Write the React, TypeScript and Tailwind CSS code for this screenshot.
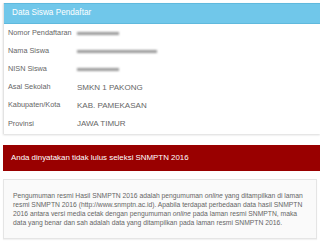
import React from "react";

const rows: { label: string; value?: string; blur?: number }[] = [
  { label: "Nomor Pendaftaran", blur: 42 },
  { label: "Nama Siswa", blur: 80 },
  { label: "NISN Siswa", blur: 42 },
  { label: "Asal Sekolah", value: "SMKN 1 PAKONG" },
  { label: "Kabupaten/Kota", value: "KAB. PAMEKASAN" },
  { label: "Provinsi", value: "JAWA TIMUR" },
];

export default function App() {
  return (
    <div
      className="w-[320px] h-[249px] overflow-hidden bg-white pl-[3px] pt-[3px]"
      style={{ fontFamily: '"Liberation Sans", Arial, sans-serif' }}
    >
      <div className="border-l border-[#e3e3e3] shadow-[0_1px_2px_rgba(0,0,0,0.15)] bg-white">
        <div className="h-[21px] bg-[#70c7ea] border-t border-b border-[#5fb9dd] flex items-center pl-[8px] text-[8.2px] text-white">
          Data Siswa Pendaftar
        </div>
        <div className="pt-0 pb-[1px]">
          {rows.map((r) => (
            <div key={r.label} className="h-[18.2px] flex items-center text-[7.3px] text-[#666]">
              <div className="w-[73px] pl-[4px]">{r.label}</div>
              {r.value ? (
                <div className="text-[8px]">{r.value}</div>
              ) : (
                <div
                  className="h-[3px] bg-[#9a9a9a] blur-[1px]"
                  style={{ width: r.blur }}
                />
              )}
            </div>
          ))}
        </div>
      </div>
      <div className="mt-[11px] h-[26px] bg-[#990000] flex items-center pl-[8px] text-[7.9px] text-white">
        Anda dinyatakan tidak lulus seleksi SNMPTN 2016
      </div>
      <div className="mt-[8px] mr-[3px] border border-[#e5e5e5] bg-[#fafafa] shadow-[0_1px_1px_rgba(0,0,0,0.05)] pl-[9px] pr-[9px] pt-[12px] pb-[11px] text-[6.75px] leading-[8.8px] text-[#666]">
        Pengumuman resmi Hasil SNMPTN 2016 adalah pengumuman <i>online</i> yang ditampilkan di laman resmi SNMPTN 2016 (http://www.snmptn.ac.id). Apabila terdapat perbedaan data hasil SNMPTN 2016 antara versi media cetak dengan pengumuman <i>online</i> pada laman resmi SNMPTN, maka data yang benar dan sah adalah data yang ditampilkan pada laman resmi SNMPTN 2016.
      </div>
    </div>
  );
}
